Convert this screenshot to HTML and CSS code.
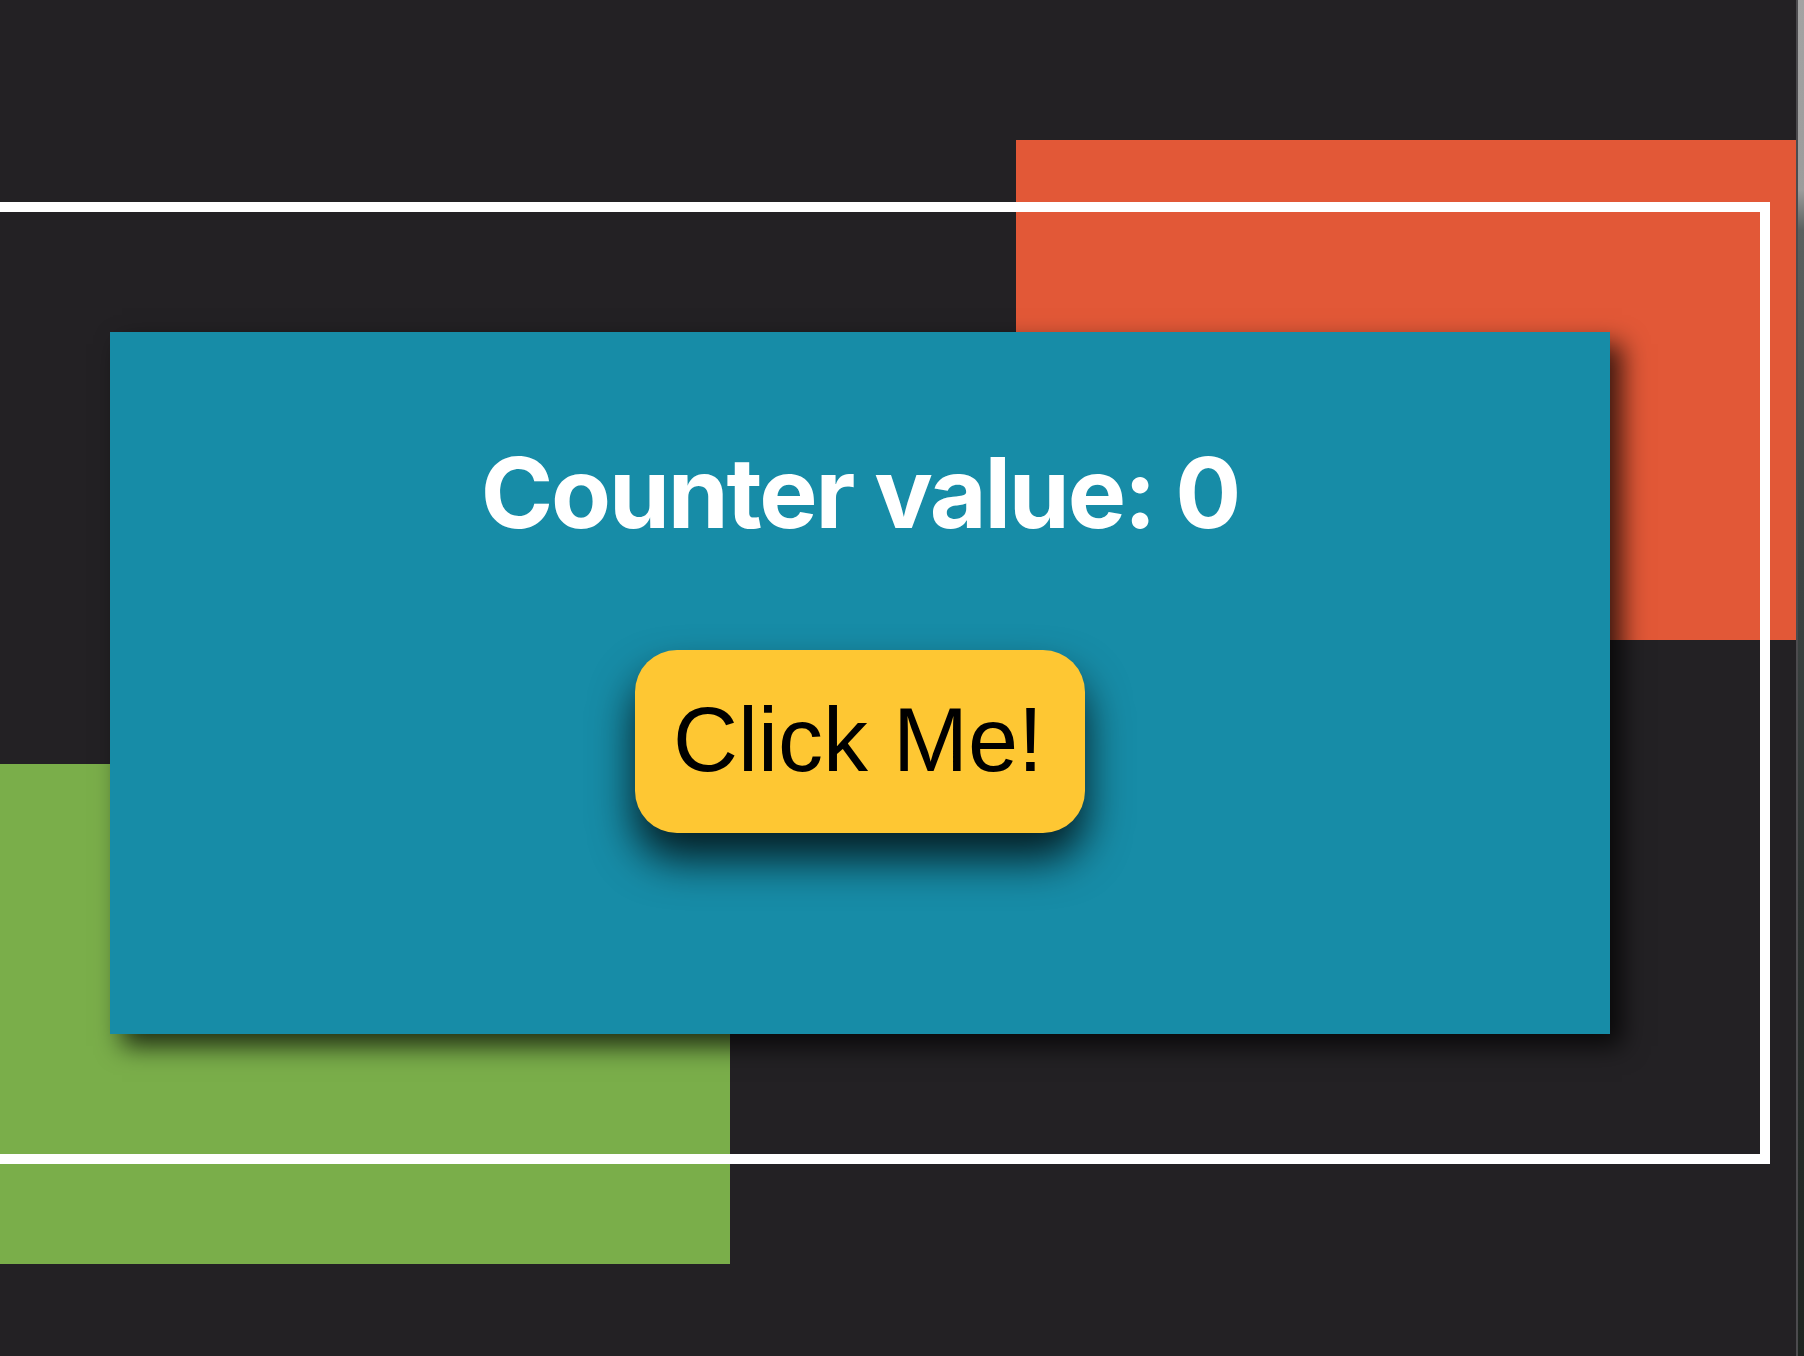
FILE: index.html
```html
<!DOCTYPE html>
<html lang="en">
<head>
<meta charset="utf-8">
<title>Counter</title>
<link rel="stylesheet" href="styles.css">
</head>
<body>
<div class="stage">
  <div class="block block-orange"></div>
  <div class="block block-green"></div>
  <div class="frame"></div>
  <div class="card">
    <h1 class="title">Counter value: 0</h1>
    <button class="btn" type="button">Click Me!</button>
  </div>
  <div class="edge"><div class="edge-line"></div><div class="edge-strip"></div></div>
</div>
</body>
</html>
```
FILE: styles.css
```css
html, body {
  margin: 0;
  padding: 0;
  background: #232124;
}
body {
  width: 1804px;
  height: 1356px;
  overflow: hidden;
}
.stage {
  display: grid;
  width: 1804px;
  height: 1356px;
  overflow: hidden;
}
.stage > * {
  grid-area: 1 / 1;
  align-self: start;
  justify-self: start;
}
.block-orange {
  margin-left: 1016px;
  margin-top: 140px;
  width: 781px;
  height: 500px;
  background: #e25837;
}
.block-green {
  margin-top: 764px;
  width: 730px;
  height: 500px;
  background: #7aae4a;
}
.frame {
  margin-left: -10px;
  margin-top: 202px;
  width: 1780px;
  height: 962px;
  box-sizing: border-box;
  border: 10px solid #ffffff;
}
.card {
  margin-left: 110px;
  margin-top: 332px;
  width: 1500px;
  height: 702px;
  background: #178ca7;
  box-shadow: 12px 12px 24px rgba(0, 0, 0, 0.75);
  display: flex;
  flex-direction: column;
  align-items: center;
  box-sizing: border-box;
  padding-top: 103px;
}
.title {
  margin: 0;
  font-family: Inter, "Liberation Sans", sans-serif;
  font-weight: 700;
  font-size: 98px;
  line-height: 116px;
  color: #ffffff;
  letter-spacing: -2.2px;
}
.btn {
  margin-top: 99px;
  width: 450px;
  height: 183px;
  border: none;
  border-radius: 42px;
  background: #fec733;
  color: #000000;
  font-family: "Liberation Sans", Arial, sans-serif;
  font-size: 90px;
  padding: 0 4px 3px 0;
  box-shadow: 0 26px 44px rgba(0, 0, 0, 0.8);
  cursor: pointer;
}
.edge {
  justify-self: end;
  width: 8px;
  height: 1356px;
  display: flex;
}
.edge-line {
  width: 2px;
  background: #4c4b4e;
}
.edge-strip {
  flex: 1;
  background: linear-gradient(to bottom, #a3a3a3 0px, #9c9c9c 190px, #5a605f 230px, #3b4241 600px, #2a302e 900px, #1e2420 1356px);
}
```
